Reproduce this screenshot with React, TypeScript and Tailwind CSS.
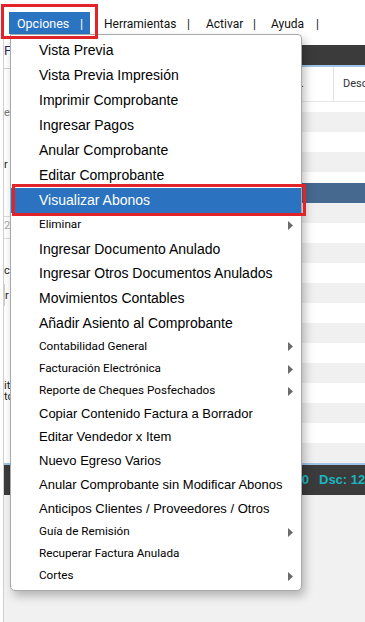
import { ReactNode } from 'react';

type Item = {
  label: string;
  size: 'lg' | 'md' | 'sm';
  arrow?: boolean;
  active?: boolean;
  h: number;
};

const items: Item[] = [
  { label: 'Vista Previa', size: 'lg', h: 25 },
  { label: 'Vista Previa Impresión', size: 'lg', h: 25 },
  { label: 'Imprimir Comprobante', size: 'lg', h: 25 },
  { label: 'Ingresar Pagos', size: 'lg', h: 25 },
  { label: 'Anular Comprobante', size: 'lg', h: 25 },
  { label: 'Editar Comprobante', size: 'lg', h: 25 },
  { label: 'Visualizar Abonos', size: 'lg', active: true, h: 25 },
  { label: 'Eliminar', size: 'sm', arrow: true, h: 24 },
  { label: 'Ingresar Documento Anulado', size: 'lg', h: 24 },
  { label: 'Ingresar Otros Documentos Anulados', size: 'lg', h: 25 },
  { label: 'Movimientos Contables', size: 'lg', h: 25 },
  { label: 'Añadir Asiento al Comprobante', size: 'lg', h: 24 },
  { label: 'Contabilidad General', size: 'sm', arrow: true, h: 23 },
  { label: 'Facturación Electrónica', size: 'sm', arrow: true, h: 22 },
  { label: 'Reporte de Cheques Posfechados', size: 'sm', arrow: true, h: 22 },
  { label: 'Copiar Contenido Factura a Borrador', size: 'md', h: 23 },
  { label: 'Editar Vendedor x Item', size: 'md', h: 24 },
  { label: 'Nuevo Egreso Varios', size: 'md', h: 24 },
  { label: 'Anular Comprobante sin Modificar Abonos', size: 'md', h: 24 },
  { label: 'Anticipos Clientes / Proveedores / Otros', size: 'md', h: 24 },
  { label: 'Guía de Remisión', size: 'sm', arrow: true, h: 22 },
  { label: 'Recuperar Factura Anulada', size: 'sm', h: 22 },
  { label: 'Cortes', size: 'sm', arrow: true, h: 22 },
];

const arial = "font-['Liberation_Sans',Arial,sans-serif]";
const segoe = "font-['Segoe_UI',Roboto,sans-serif]";

const sizeCls = {
  lg: `${arial} text-[14px]`,
  md: `${arial} text-[13px]`,
  sm: `${segoe} text-[11.7px]`,
};

function Arrow() {
  return (
    <svg width="5" height="9" viewBox="0 0 5 9" className="shrink-0">
      <path d="M0 0 L5 4.5 L0 9 Z" fill="#6b6b6b" />
    </svg>
  );
}

function MenuRow({ item }: { item: Item }) {
  return (
    <div
      style={{ height: item.h }}
      className={`flex items-center pl-[28px] pr-[8px] ${
        item.active ? 'bg-[#2b73c0] text-white' : 'text-black'
      } ${sizeCls[item.size]}`}
    >
      <span className="flex-1 whitespace-nowrap">{item.label}</span>
      {item.arrow && <Arrow />}
    </div>
  );
}

function NavLink({ w, children }: { w: string; children: ReactNode }) {
  return <span className={`${w} shrink-0 whitespace-nowrap`}>{children}</span>;
}

function LeftForm() {
  // only a sliver of this column shows beside the menu
  return (
    <div className={`w-[190px] shrink-0 flex flex-col ${segoe} text-[11px] text-[#222] leading-[14px]`}>
      <div className="h-[30px] pt-[6px] text-[13px] text-[#2d2b5e]">F</div>
      <div className="h-[32px] border-t border-[#cfcfcf]"></div>
      <div className="h-[20px] pt-[6px] text-[#777]">e</div>
      <div className="h-[33px]"></div>
      <div className="h-[22px] pt-[5px]">r</div>
      <div className="h-[42px] border-b border-[#dcdcdc]"></div>
      <div className="h-[22px] pt-[2px] text-[#aaa] border-b border-[#dcdcdc]">2</div>
      <div className="h-[25px]"></div>
      <div className="h-[20px]">c</div>
      <div className="h-[22px] pt-[5px] border-l border-[#cfcfcf]">r</div>
      <div className="h-[74px]"></div>
      <div className="h-[11px] leading-[11px]">it</div>
      <div className="h-[11px] leading-[11px]">to</div>
    </div>
  );
}

function Grid() {
  const rows = Array.from({ length: 13 }, (_, i) => i);
  return (
    <div className="flex-1 flex flex-col pt-[7px]">
      <div className="h-[20px] bg-[#3b3b3b]"></div>
      <div className="h-[2px] bg-[#9fc4e8]"></div>
      <div className={`h-[35px] bg-white flex items-center text-[11px] ${segoe} text-[#333] border-b border-[#e6e6e6]`}>
        <div className="w-[140px] shrink-0 h-full border-r border-[#e2e2e2] flex items-center justify-end pr-[29px]">Comp.</div>
        <div className="pl-[9px] whitespace-nowrap">Desc</div>
      </div>
      <div className="h-[10px] bg-white"></div>
      <div className="h-[20px] bg-[#f0f0f0]"></div>
      <div className="h-[20px] bg-white"></div>
      <div className="h-[20px] bg-[#f0f0f0]"></div>
      <div className="h-[11px] bg-white"></div>
      <div className="h-[20px] bg-[#45698f]"></div>
      {rows.map((i) => (
        <div key={i} className={`h-[20px] ${i % 2 === 0 ? 'bg-[#f0f0f0]' : 'bg-white'}`}></div>
      ))}
    </div>
  );
}

export default function App() {
  return (
    <div className="relative w-[365px] h-[622px] overflow-hidden bg-white">
      <div className={`h-[38px] flex items-start pt-[12px] pl-[9px] text-[12px] ${segoe} text-[#111]`}>
        <div className="h-[22px] w-[81px] shrink-0 bg-[#2b74c2] text-white flex items-center pl-[8px] pt-[2px] text-[12.5px]">
          <span className="w-[63px]">Opciones</span>
          <span>|</span>
        </div>
        <div className="h-[22px] flex items-center pl-[14px] pt-[2px]">
          <NavLink w="w-[83px]">Herramientas</NavLink>
          <NavLink w="w-[19px]">|</NavLink>
          <NavLink w="w-[47px]">Activar</NavLink>
          <NavLink w="w-[18px]">|</NavLink>
          <NavLink w="w-[45px]">Ayuda</NavLink>
          <NavLink w="w-[6px]">|</NavLink>
        </div>
      </div>

      <div className="ml-[3px] border-l border-[#d0d0d0] h-[584px] flex flex-col bg-[#f1f1f1]">
        <div className="flex bg-white">
          <LeftForm />
          <Grid />
        </div>
        <div className="h-[2px] bg-[#9fc4e8]"></div>
        <div className={`h-[30px] bg-[#3b3b3b] flex items-center text-[13px] font-bold ${arial} text-[#1ab5c2]`}>
          <span className="w-[305px] shrink-0 text-right whitespace-nowrap">Total: 1.520,00</span>
          <span className="ml-[10px] shrink-0 whitespace-nowrap">Dsc: 12,50</span>
        </div>
      </div>

      <div className="absolute left-[10px] top-[34px] w-[292px] bg-white border border-[#a9a9a9] rounded-tr-[4px] rounded-br-[5px] rounded-bl-[5px] shadow-[3px_5px_10px_rgba(0,0,0,0.25)] py-[3px]">
        {items.map((it) => (
          <MenuRow key={it.label} item={it} />
        ))}
      </div>

      <div className="absolute left-[1px] top-[4px] w-[97px] h-[35px] border-[3px] border-[#e2232a]"></div>
      <div className="absolute left-[12px] top-[184px] w-[294px] h-[32px] border-[3px] border-[#e2232a]"></div>
    </div>
  );
}
